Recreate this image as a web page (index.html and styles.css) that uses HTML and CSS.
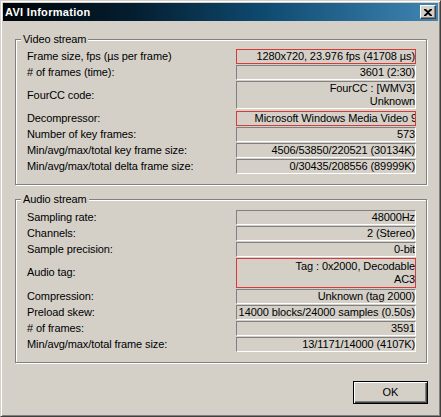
FILE: index.html
```html
<!DOCTYPE html>
<html>
<head>
<meta charset="utf-8">
<link rel="stylesheet" href="styles.css">
</head>
<body>
<div class="win">
  <div class="titlebar">
    <span class="title">AVI Information</span>
    <button class="close" aria-label="Close">
      <svg width="8" height="7" viewBox="0 0 8 7"><path d="M0 0h2l2 2 2-2h2v1L5 3.5 8 6v1H6L4 5 2 7H0V6l3-2.5L0 1z" fill="#000"/></svg>
    </button>
  </div>
  <div class="client">
    <fieldset class="group video">
      <legend>Video stream</legend>
      <div class="rows">
        <div class="lbl">Frame size, fps (µs per frame)</div><div class="val hl">1280x720, 23.976 fps (41708 µs)</div>
        <div class="lbl"># of frames (time):</div><div class="val">3601 (2:30)</div>
        <div class="lbl">FourCC code:</div><div class="val tall">FourCC : [WMV3]<br>Unknown</div>
        <div class="lbl">Decompressor:</div><div class="val hl clip"><span>Microsoft Windows Media Video 9</span></div>
        <div class="lbl">Number of key frames:</div><div class="val">573</div>
        <div class="lbl">Min/avg/max/total key frame size:</div><div class="val">4506/53850/220521 (30134K)</div>
        <div class="lbl">Min/avg/max/total delta frame size:</div><div class="val">0/30435/208556 (89999K)</div>
      </div>
    </fieldset>
    <fieldset class="group audio">
      <legend>Audio stream</legend>
      <div class="rows">
        <div class="lbl">Sampling rate:</div><div class="val">48000Hz</div>
        <div class="lbl">Channels:</div><div class="val">2 (Stereo)</div>
        <div class="lbl">Sample precision:</div><div class="val">0-bit</div>
        <div class="lbl">Audio tag:</div><div class="val tall hl">Tag : 0x2000, Decodable<br>AC3</div>
        <div class="lbl">Compression:</div><div class="val">Unknown (tag 2000)</div>
        <div class="lbl">Preload skew:</div><div class="val">14000 blocks/24000 samples (0.50s)</div>
        <div class="lbl"># of frames:</div><div class="val">3591</div>
        <div class="lbl">Min/avg/max/total frame size:</div><div class="val">13/1171/14000 (4107K)</div>
      </div>
    </fieldset>
    <div class="buttons">
      <button class="ok">OK</button>
    </div>
  </div>
</div>
</body>
</html>
```
FILE: styles.css
```css
html, body {
  margin: 0;
  padding: 0;
  background: #d4d0c8;
}
body {
  font-family: "Liberation Sans", Arial, sans-serif;
  font-size: 11px;
  letter-spacing: -0.1px;
  color: #000;
}
.win {
  width: 441px;
  height: 417px;
  box-sizing: border-box;
  background: #d4d0c8;
  border: 1px solid;
  border-color: #d4d0c8 #404040 #404040 #d4d0c8;
  box-shadow: inset 1px 1px #fff, inset -1px -1px #808080;
  padding: 2px;
  display: flex;
  flex-direction: column;
}
.titlebar {
  height: 18px;
  background: linear-gradient(to right, #000509 0%, #041e30 30%, #0e4a70 60%, #3f86b4 100%);
  display: flex;
  align-items: center;
  justify-content: space-between;
  padding: 0 2px 0 2px;
}
.title {
  color: #fff;
  font-weight: bold;
  font-size: 11px;
  letter-spacing: 0.3px;
}
.close {
  width: 16px;
  height: 14px;
  padding: 0;
  margin: 0;
  box-sizing: border-box;
  background: #d4d0c8;
  border: 1px solid;
  border-color: #fff #404040 #404040 #fff;
  box-shadow: inset -1px -1px #808080;
  display: flex;
  align-items: center;
  justify-content: center;
}
.close svg { display: block; }
.client {
  flex: 1;
  display: flex;
  flex-direction: column;
  padding: 12px 11px 0 12px;
}
.group {
  margin: 0;
  border: 1px solid #808080;
  box-shadow: inset 1px 1px #fff, 1px 1px #fff;
  padding: 3px 10px 10px 11px;
}
.group legend {
  margin-left: -6px;
  padding: 0 2px;
  line-height: 13px;
  background: #d4d0c8;
}
.audio {
  margin-top: 8px;
  padding-top: 4px;
}
.rows {
  display: grid;
  grid-template-columns: 1fr 180px;
  align-items: center;
  row-gap: 1.2px;
}
.audio .rows { row-gap: 1.5px; }
.lbl {
  white-space: nowrap;
  line-height: 13px;
}
.val {
  height: 15px;
  box-sizing: border-box;
  border: 1px solid;
  border-color: #808080 #fff #fff #808080;
  text-align: right;
  line-height: 13px;
  padding-right: 0;
  white-space: nowrap;
  overflow: hidden;
}
.audio .val { height: 14.5px; line-height: 12.5px; }
.val.tall { height: 28px; white-space: normal; }
.audio .val.tall { height: 29.5px; padding-top: 1px; }
.val.hl { border-color: #d83a3a; }
.val.clip span { margin-right: -2px; }
.buttons {
  display: flex;
  justify-content: flex-end;
  margin-top: 18px;
}
.ok {
  width: 75px;
  height: 23px;
  box-sizing: border-box;
  font-family: "Liberation Sans", Arial, sans-serif;
  font-size: 11px;
  color: #000;
  background: #d4d0c8;
  border: 1px solid #000;
  box-shadow: inset 1px 1px #fff, inset -1px -1px #404040, inset -2px -2px #808080;
  padding: 0;
  margin-right: -1px;
}
```
